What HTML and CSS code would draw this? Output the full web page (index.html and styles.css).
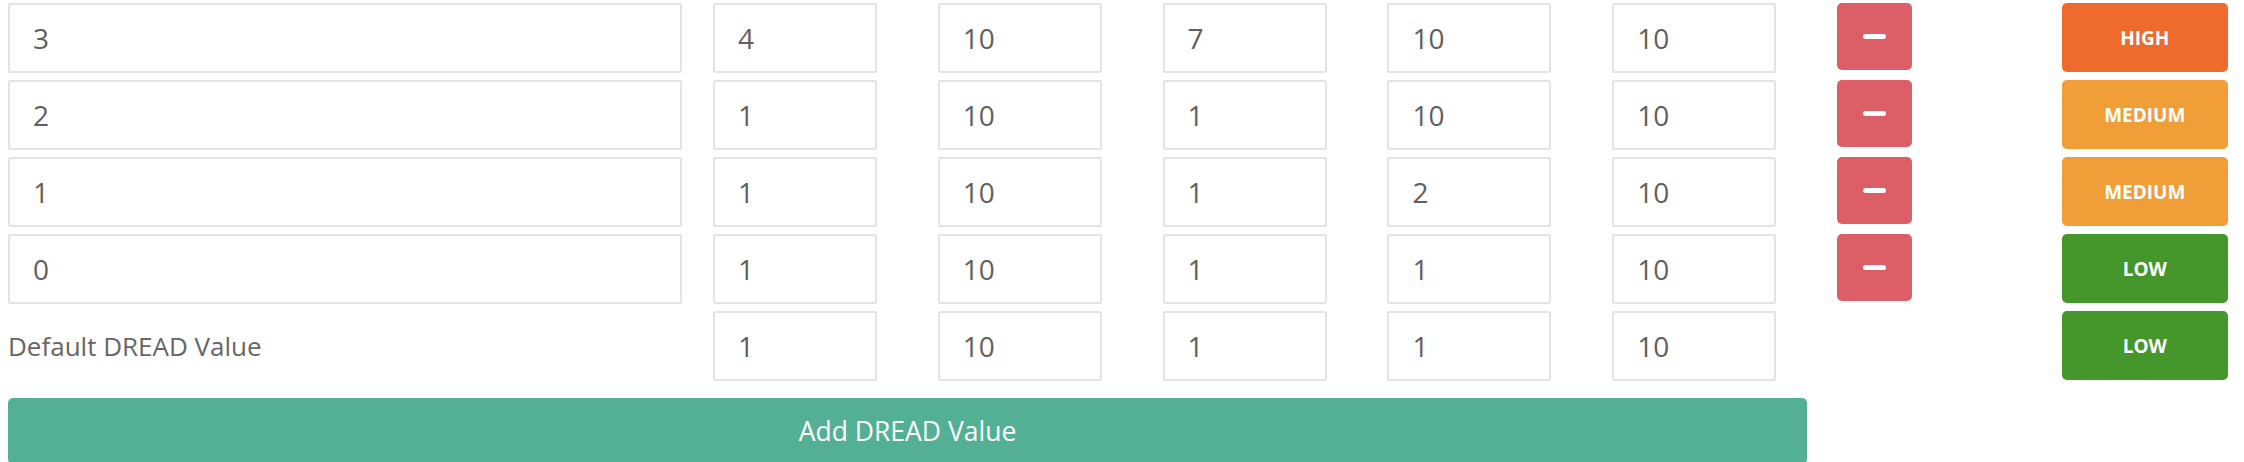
FILE: index.html
```html
<!DOCTYPE html>
<html lang="en">
<head>
  <meta charset="UTF-8" />
  <title>DREAD Values</title>
  <link rel="stylesheet" href="styles.css">
</head>
<body>
  <!-- DREAD value table -->
  <div class="dread-table">
    <div class="dread-row">
      <input class="field field-name" type="text" value="3" />
      <input class="field" type="text" value="4" />
      <input class="field" type="text" value="10" />
      <input class="field" type="text" value="7" />
      <input class="field" type="text" value="10" />
      <input class="field" type="text" value="10" />
      <button class="remove-btn" title="Remove"><span class="minus"></span></button>
      <button class="risk-btn risk-high">HIGH</button>
    </div>
    <div class="dread-row">
      <input class="field field-name" type="text" value="2" />
      <input class="field" type="text" value="1" />
      <input class="field" type="text" value="10" />
      <input class="field" type="text" value="1" />
      <input class="field" type="text" value="10" />
      <input class="field" type="text" value="10" />
      <button class="remove-btn" title="Remove"><span class="minus"></span></button>
      <button class="risk-btn risk-medium">MEDIUM</button>
    </div>
    <div class="dread-row">
      <input class="field field-name" type="text" value="1" />
      <input class="field" type="text" value="1" />
      <input class="field" type="text" value="10" />
      <input class="field" type="text" value="1" />
      <input class="field" type="text" value="2" />
      <input class="field" type="text" value="10" />
      <button class="remove-btn" title="Remove"><span class="minus"></span></button>
      <button class="risk-btn risk-medium">MEDIUM</button>
    </div>
    <div class="dread-row">
      <input class="field field-name" type="text" value="0" />
      <input class="field" type="text" value="1" />
      <input class="field" type="text" value="10" />
      <input class="field" type="text" value="1" />
      <input class="field" type="text" value="1" />
      <input class="field" type="text" value="10" />
      <button class="remove-btn" title="Remove"><span class="minus"></span></button>
      <button class="risk-btn risk-low">LOW</button>
    </div>
    <div class="dread-row">
      <label class="default-label">Default DREAD Value</label>
      <input class="field" type="text" value="1" />
      <input class="field" type="text" value="10" />
      <input class="field" type="text" value="1" />
      <input class="field" type="text" value="1" />
      <input class="field" type="text" value="10" />
      <div></div>
      <button class="risk-btn risk-low">LOW</button>
    </div>
  </div>

  <button class="add-btn">Add DREAD Value</button>
</body>
</html>
```

FILE: styles.css
```css
body {
  font-family: 'Open Sans', 'Liberation Sans', sans-serif;
  margin: 0;
  padding: 3px 8px 0;
  background: #fff;
  color: #666;
  overflow: hidden;
}

/* Table rows */
.dread-table {
  display: flex;
  flex-direction: column;
  gap: 7px;
}

.dread-row {
  display: grid;
  grid-template-columns: 705px repeat(6, 224.8px) 166px;
  align-items: start;
  height: 70px;
}

.field {
  box-sizing: border-box;
  width: 164px;
  height: 70px;
  padding: 0 23px;
  border: 2px solid #e4e4e4;
  border-radius: 2px;
  font-family: inherit;
  font-size: 28px;
  color: #606060;
  background: #fff;
  outline: none;
}

.field-name {
  width: 674px;
}

.default-label {
  align-self: center;
  font-size: 26px;
  color: #666;
}

/* Remove button */
.remove-btn {
  width: 75px;
  height: 67px;
  border: none;
  border-radius: 5px;
  background: #dc5f68;
  display: flex;
  justify-content: center;
  align-items: center;
  cursor: pointer;
}

.minus {
  width: 23px;
  height: 5px;
  border-radius: 3px;
  background: #fff;
}

/* Risk labels */
.risk-btn {
  width: 166px;
  height: 69px;
  border: none;
  border-radius: 5px;
  color: #fff;
  font-family: inherit;
  font-size: 19px;
  font-weight: bold;
  cursor: pointer;
}

.risk-high {
  background: #ee6b2d;
}

.risk-medium {
  background: #f09f38;
}

.risk-low {
  background: #45962b;
}

/* Add button */
.add-btn {
  display: block;
  margin-top: 17px;
  width: 1799px;
  height: 66px;
  border: none;
  border-radius: 5px;
  background: #53b095;
  color: #fff;
  font-family: inherit;
  font-size: 26.5px;
  cursor: pointer;
}
```
